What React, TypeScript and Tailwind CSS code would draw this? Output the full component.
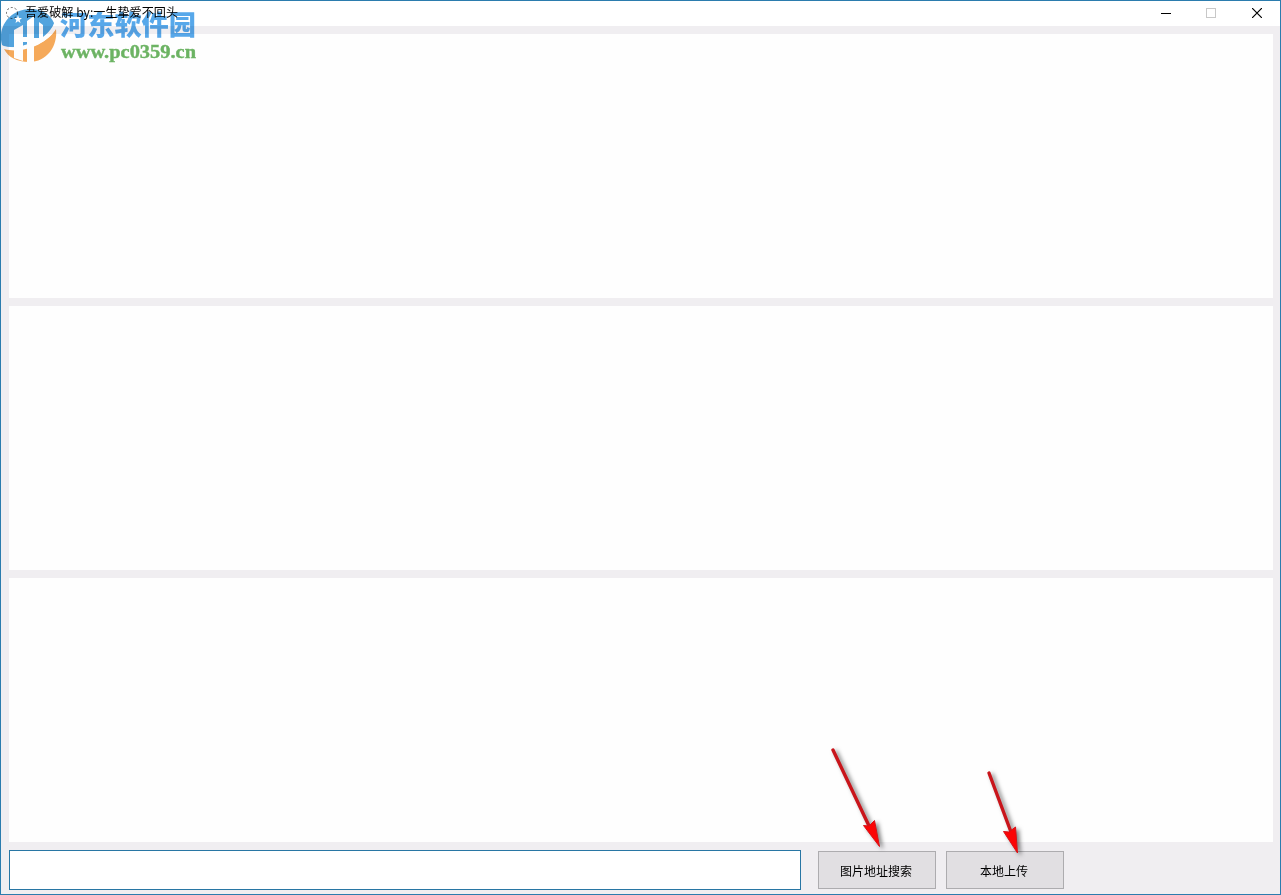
import React from "react";

const panels = [1, 2, 3];

const WatermarkLogo = () => (
  <svg width="60" height="66" viewBox="0 0 60 66" className="shrink-0">
    {/* Blue upper part of the globe */}
    <path
      d="M2 45 C-3 28 9 9 31 9 C42 9 50 14 54 23 C53 30 46 37 36 41 C24 46 9 50 2 45 Z"
      fill="#3f9adb"
    />
    {/* Orange lower part */}
    <path
      d="M4 49 C20 52 46 46 56 29 C58 46 47 62 29 62 C17 62 8 57 4 49 Z"
      fill="#f5a148"
    />
    {/* Towers */}
    <path d="M14 30 L23 25 V61 L14 58 Z" fill="#fff" />
    <path d="M27 21 L34 16 V62 H27 Z" fill="#fff" />
    <path d="M23 37 H27 V42 H23 Z" fill="#fff" />
    <path d="M39 22 L43 25 V42 H39 Z" fill="#fff" />
    <path d="M34 38 H39 V42 H34 Z" fill="#fff" />
    {/* Orbit band */}
    <path d="M2 46 C20 50 43 44 54 24 L56 28 C47 45 22 54 4 49 Z" fill="#fff" />
    <path
      d="M18 15 L19 18 L22 18 L19.7 20 L20.5 23 L18 21.3 L15.5 23 L16.3 20 L14 18 L17 18 Z"
      fill="#fff"
    />
  </svg>
);

const Watermark = () => (
  <div className="pointer-events-none absolute left-0 top-0 flex opacity-90 mix-blend-multiply">
    <WatermarkLogo />
    <svg width="140" height="66" className="overflow-visible">
      <text
        x="0"
        y="35"
        textLength="136"
        lengthAdjust="spacingAndGlyphs"
        fill="#459fe8"
        className="font-['Noto_Sans_CJK_SC',sans-serif] text-[27px] font-black"
      >
        河东软件园
      </text>
      <text
        x="1"
        y="58"
        textLength="135"
        lengthAdjust="spacingAndGlyphs"
        fill="#5cac52"
        stroke="#5cac52"
        strokeWidth="0.4"
        className="font-['Liberation_Serif',serif] text-[19px] font-bold"
      >
        www.pc0359.cn
      </text>
    </svg>
  </div>
);

const Arrows = () => (
  <svg
    width="210"
    height="120"
    viewBox="825 740 210 120"
    className="pointer-events-none absolute left-[825px] top-[740px] drop-shadow-[3px_2px_2px_rgba(0,0,0,0.5)]"
  >
    <path d="M833 750 L870 828" stroke="#c9151b" strokeWidth="3.4" strokeLinecap="round" />
    <path d="M879.5 846.5 L863.5 825.5 L869 826 L874.5 820.5 Z" fill="#fb0505" stroke="#d91015" strokeWidth="1" />
    <path d="M989 773 L1011 832" stroke="#c9151b" strokeWidth="3.4" strokeLinecap="round" />
    <path d="M1017.5 853 L1003.5 831.5 L1009 832 L1015.5 827 Z" fill="#fb0505" stroke="#d91015" strokeWidth="1" />
  </svg>
);

const App = () => {
  return (
    <div className="relative flex h-[895px] w-[1281px] flex-col overflow-hidden border border-[#2b7cae] bg-[#f0eef1] font-['Noto_Sans_CJK_SC',sans-serif] text-xs text-black">
      {/* Title bar */}
      <div className="flex h-[25px] shrink-0 items-start bg-white">
        <svg width="14" height="14" viewBox="0 0 14 14" className="ml-1 mt-[5px] shrink-0" fill="none">
          <circle cx="7" cy="7" r="5.5" stroke="#555" strokeDasharray="2 2" />
        </svg>
        <svg width="160" height="18" className="ml-[6px] mt-[3px]">
          <text x="0" y="13" textLength="153" lengthAdjust="spacingAndGlyphs">
            吾爱破解 by:一生挚爱不回头
          </text>
        </svg>
        <div className="ml-auto flex">
          <button aria-label="Minimize" className="flex h-6 w-[45px] items-center justify-center">
            <svg width="10" height="10" shapeRendering="crispEdges">
              <path d="M0 5.5 H10" stroke="#000" />
            </svg>
          </button>
          <button aria-label="Maximize" className="flex h-6 w-[45px] items-center justify-center" disabled>
            <svg width="10" height="10" fill="none" shapeRendering="crispEdges">
              <path d="M0.5 0.5 H9.5 V9.5 H0.5 Z" stroke="#c8c8c8" />
            </svg>
          </button>
          <button aria-label="Close" className="flex h-6 w-[47px] items-center justify-center">
            <svg width="10" height="10">
              <path d="M0 0 L10 10 M10 0 L0 10" stroke="#000" strokeWidth="1.2" />
            </svg>
          </button>
        </div>
      </div>

      {/* Result panels */}
      <div className="flex flex-col gap-2 pl-2 pr-[7px] pt-2">
        {panels.map((i) => (
          <div key={i} className="h-[264px] bg-[#fefefe]"></div>
        ))}
      </div>

      {/* Search row */}
      <div className="flex items-center pl-2 pt-2">
        <input
          type="text"
          className="h-10 w-[792px] border border-[#2876a4] bg-white px-2 outline-none"
        />
        <button className="ml-[17px] h-[38px] w-[118px] border border-[#adacaf] bg-[#e1dfe2] pr-0.5 pt-0.5">
          图片地址搜索
        </button>
        <button className="ml-[10px] h-[38px] w-[118px] border border-[#adacaf] bg-[#e1dfe2] pr-0.5 pt-0.5">
          本地上传
        </button>
      </div>

      {/* Overlays start at the window's outer corner */}
      <div className="absolute -left-px -top-px mix-blend-multiply">
        <Watermark />
      </div>
      <div className="absolute -left-px -top-px">
        <Arrows />
      </div>
    </div>
  );
};

export default App;
